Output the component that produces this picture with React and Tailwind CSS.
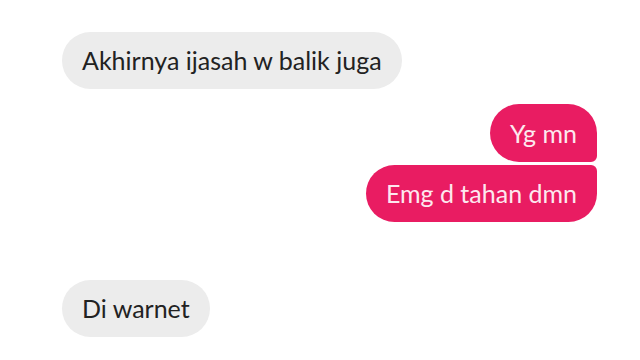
import React from 'react';

const font = { fontFamily: 'Lato, "Open Sans", sans-serif' };

const Received = ({ text, className = '' }) => (
    <div className={`self-start h-[57px] flex items-center px-5 rounded-full bg-[#ececec] text-[#222222] text-[25px] leading-none ${className}`}>
        {text}
    </div>
);

const App = () => {
    return (
        <div className="w-[640px] h-[360px] bg-white overflow-hidden flex flex-col pl-[62px] pr-[43px] pt-[32px]" style={font}>
            <Received text="Akhirnya ijasah w balik juga" />
            <div className="flex flex-col items-end mt-[15px] gap-[3px]">
                <div className="h-[58px] flex items-center px-5 rounded-[29px] rounded-br-[6px] bg-[#e91c62] text-[#fde8ef] text-[25px] leading-none">
                    Yg mn
                </div>
                <div className="h-[57px] flex items-center px-5 rounded-[29px] rounded-tr-[6px] bg-[#e91c62] text-[#fde8ef] text-[25px] leading-none">
                    Emg d tahan dmn
                </div>
            </div>
            <Received text="Di warnet" className="mt-[58px]" />
        </div>
    );
};

export default App;
